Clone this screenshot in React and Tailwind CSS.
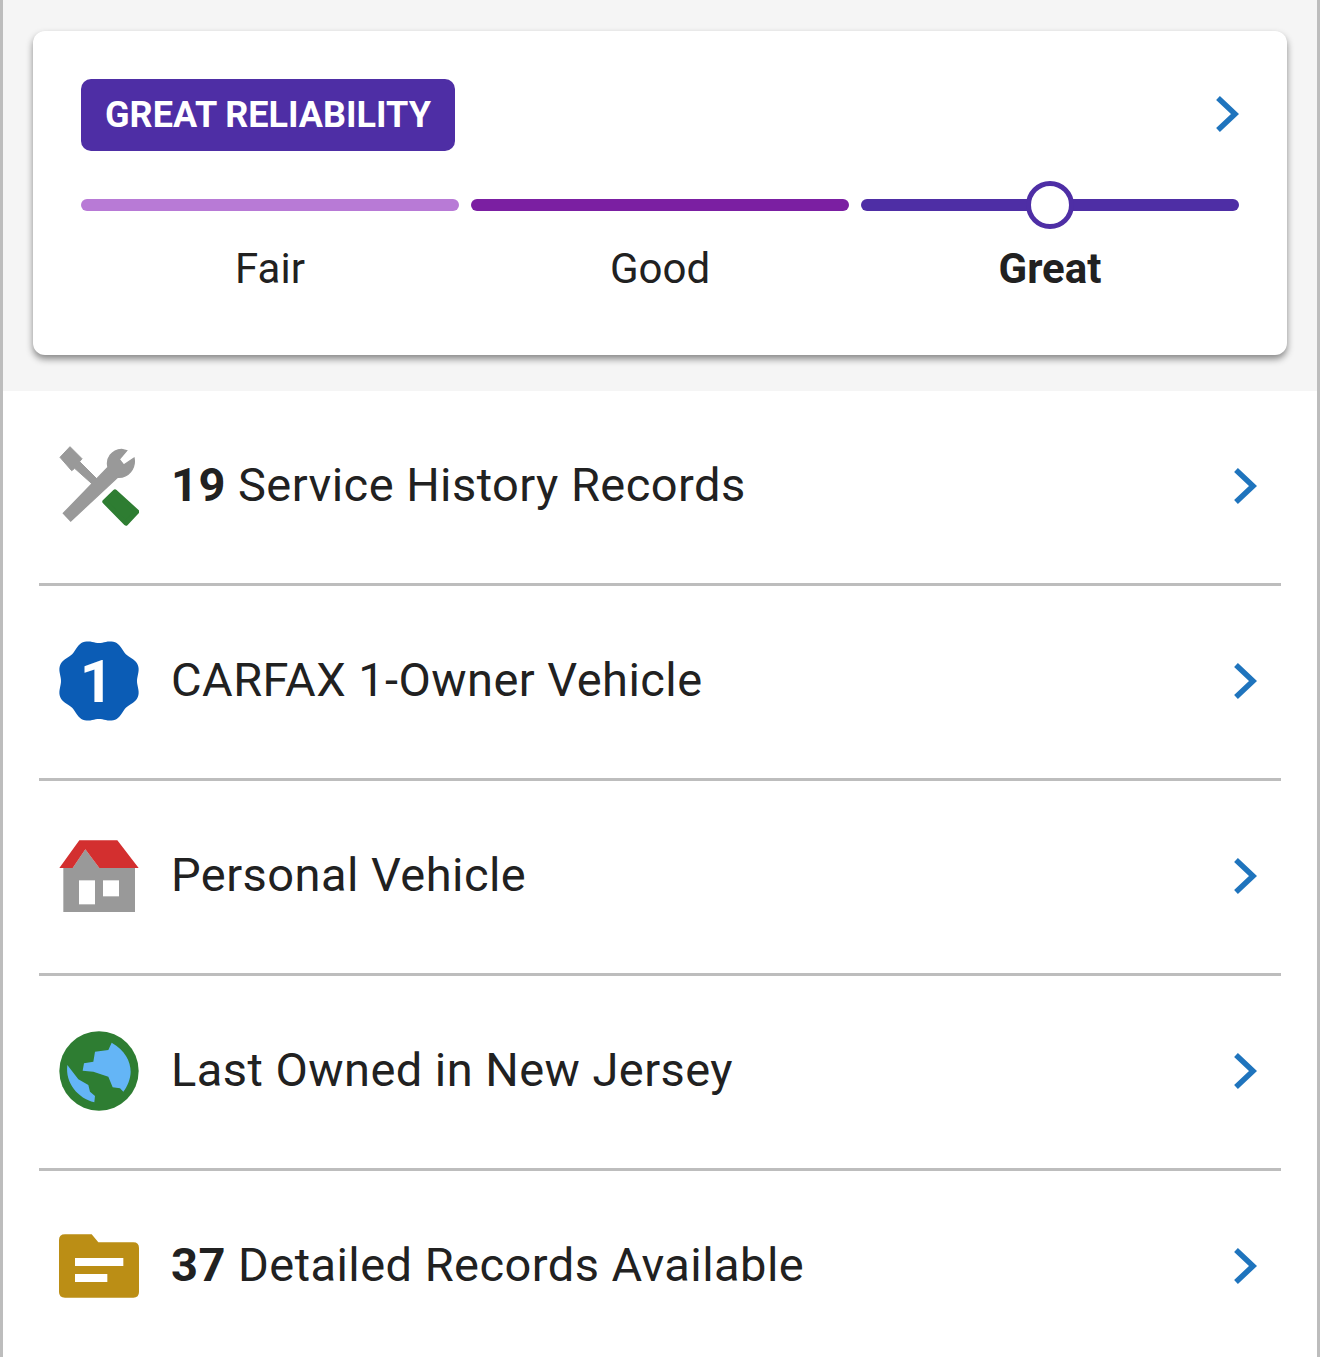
const Chevron = ({ className }) => (
  <svg viewBox="0 0 24 36" className={className} fill="none" stroke="#1f74bd" strokeWidth="5.5">
    <path d="M3 2 L20 18 L3 34" />
  </svg>
);

const ToolsIcon = () => (
  <svg viewBox="57 48 240 240" className="w-20 h-20 shrink-0">
    <path fill="#999999" stroke="#999999" strokeWidth="3" d="M90 50 L126 86 L119 95 L172 148 L160 165 L104 115 L95 122 L60 82 Z" />
    <path fill="#999999" stroke="#999999" strokeWidth="4" d="M92 273 L70 250 L204 112 C197 85 215 60 245 58 L260 62 L238 88 L251 105 L282 84 C288 115 265 144 233 142 Z" />
    <path fill="#2e7d32" stroke="#2e7d32" strokeWidth="14" strokeLinejoin="round" d="M225 185 L291 245 L258 280 L194 215 Z" />
  </svg>
);

// scalloped edge, 8 lobes
const badgePoints = Array.from({ length: 144 }, (_, i) => {
  const a = (i / 144) * Math.PI * 2;
  const r = 120 + 6 * Math.cos(8 * (a - Math.PI / 8));
  return `${177 + r * Math.cos(a)},${168 + r * Math.sin(a)}`;
}).join(" ");

const BadgeIcon = () => (
  <svg viewBox="57 48 240 240" className="w-20 h-20 shrink-0">
    <polygon fill="#0b5cb5" points={badgePoints} />
    <text x="170" y="230" textAnchor="middle" fill="#ffffff" fontSize="176" fontWeight="700" fontFamily="Roboto, sans-serif">1</text>
  </svg>
);

const HouseIcon = () => (
  <svg viewBox="57 32 240 240" className="w-20 h-20 shrink-0">
    <path fill="#999999" d="M70 128 L98 128 L136 72 L178 128 L285 128 L285 260 L70 260 Z" />
    <path fill="#d32f2f" d="M118 45 L232 45 L296 128 L178 128 L136 72 L98 128 L58 128 Z" />
    <rect x="117" y="165" width="48" height="72" fill="#ffffff" />
    <rect x="189" y="165" width="48" height="48" fill="#ffffff" />
  </svg>
);

const GlobeIcon = () => (
  <svg viewBox="57 33 240 240" className="w-20 h-20 shrink-0">
    <circle cx="177" cy="153" r="119" fill="#2e7d32" />
    <path fill="#64b5f6" d="M215 68 C255 90 272 125 272 155 C272 175 262 200 250 215 L240 205 L218 202 L205 170 L160 155 L128 152 L132 130 L160 125 L165 95 L205 90 Z" />
    <path fill="#64b5f6" d="M82 135 L115 178 L145 195 L150 215 L165 228 L163 247 C115 235 75 190 82 135 Z" />
  </svg>
);

const FolderIcon = () => (
  <svg viewBox="57 18 240 240" className="w-20 h-20 shrink-0">
    <path fill="#bb8e15" d="M75 43 L155 43 L175 67 L280 67 Q297 67 297 84 L297 216 Q297 233 280 233 L75 233 Q57 233 57 216 L57 60 Q57 43 75 43 Z" />
    <rect x="105" y="114" width="145" height="24" fill="#ffffff" />
    <rect x="105" y="162" width="97" height="24" fill="#ffffff" />
  </svg>
);

const Row = ({ icon, bold, text, last }) => (
  <div className={`mx-9 h-[195px] flex items-center pl-5 pr-6 pb-[2px] border-b-[3px] ${last ? "border-transparent" : "border-[#bdbdbd]"}`}>
    {icon}
    <div className="ml-[32px] pb-[2px] text-[47px] tracking-[0.45px] text-[#212121] flex-1">
      {bold && <span className="font-bold">{bold} </span>}
      {text}
    </div>
    <Chevron className="w-6 h-9" />
  </div>
);

export default function App() {
  return (
    <div className="w-[1320px] h-[1357px] overflow-hidden bg-white border-l-[3px] border-r-[3px] border-[#bdbdbd] font-['Roboto',sans-serif]">
      <div className="bg-[#f5f5f5] h-[391px] pt-[31px] px-[30px]">
        <div className="bg-white rounded-xl h-[324px] p-12 shadow-[0_4px_7px_rgba(0,0,0,0.45)]">
          <div className="flex items-center justify-between">
            <div className="bg-[#4e2ea5] rounded-[10px] h-[72px] w-[374px] flex items-center justify-center text-white text-[36px] font-bold">
              GREAT RELIABILITY
            </div>
            <Chevron className="w-6 h-9 mb-[2px]" />
          </div>
          <div className="grid grid-cols-3 gap-3 mt-12">
            <div>
              <div className="h-3 rounded-full bg-[#b87ad6]"></div>
              <div className="text-center text-[42px] leading-[48px] mt-[34px] text-[#212121]">Fair</div>
            </div>
            <div>
              <div className="h-3 rounded-full bg-[#7b1fa2]"></div>
              <div className="text-center text-[42px] leading-[48px] mt-[34px] text-[#212121]">Good</div>
            </div>
            <div>
              <div className="relative h-3 rounded-full bg-[#4e2ea5]">
                <div className="absolute left-[165px] top-[-18px] w-12 h-12 rounded-full bg-white border-[5px] border-[#4e2ea5]"></div>
              </div>
              <div className="text-center text-[42px] leading-[48px] mt-[34px] font-bold text-[#212121]">Great</div>
            </div>
          </div>
        </div>
      </div>
      <Row icon={<ToolsIcon />} bold="19" text="Service History Records" />
      <Row icon={<BadgeIcon />} text="CARFAX 1-Owner Vehicle" />
      <Row icon={<HouseIcon />} text="Personal Vehicle" />
      <Row icon={<GlobeIcon />} text="Last Owned in New Jersey" />
      <Row icon={<FolderIcon />} bold="37" text="Detailed Records Available" last />
    </div>
  );
}
